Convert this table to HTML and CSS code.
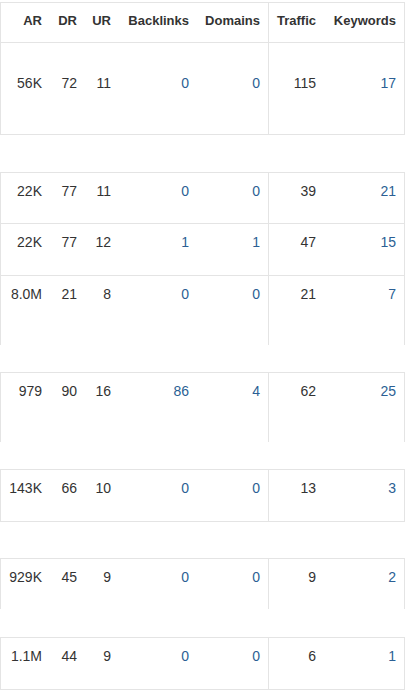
FILE: index.html
```html
<!DOCTYPE html>
<html lang="en">
<head>
  <meta charset="UTF-8">
  <title>Backlink metrics</title>
  <link rel="stylesheet" href="styles.css">
</head>
<body>
  <div class="metrics">
    <div class="row row-head">
      <div class="cell">AR</div>
      <div class="cell">DR</div>
      <div class="cell">UR</div>
      <div class="cell">Backlinks</div>
      <div class="cell cell-split">Domains</div>
      <div class="cell">Traffic</div>
      <div class="cell">Keywords</div>
    </div>

    <div class="row row-tall closed">
      <div class="cell">56K</div>
      <div class="cell">72</div>
      <div class="cell">11</div>
      <div class="cell link">0</div>
      <div class="cell link cell-split">0</div>
      <div class="cell">115</div>
      <div class="cell link">17</div>
    </div>
    <div class="gap gap-lg"></div>

    <div class="row h51">
      <div class="cell">22K</div>
      <div class="cell">77</div>
      <div class="cell">11</div>
      <div class="cell link">0</div>
      <div class="cell link cell-split">0</div>
      <div class="cell">39</div>
      <div class="cell link">21</div>
    </div>
    <div class="row h52">
      <div class="cell">22K</div>
      <div class="cell">77</div>
      <div class="cell">12</div>
      <div class="cell link">1</div>
      <div class="cell link cell-split">1</div>
      <div class="cell">47</div>
      <div class="cell link">15</div>
    </div>
    <div class="row h70">
      <div class="cell">8.0M</div>
      <div class="cell">21</div>
      <div class="cell">8</div>
      <div class="cell link">0</div>
      <div class="cell link cell-split">0</div>
      <div class="cell">21</div>
      <div class="cell link">7</div>
    </div>
    <div class="gap gap-sm"></div>

    <div class="row h70">
      <div class="cell">979</div>
      <div class="cell">90</div>
      <div class="cell">16</div>
      <div class="cell link">86</div>
      <div class="cell link cell-split">4</div>
      <div class="cell">62</div>
      <div class="cell link">25</div>
    </div>
    <div class="gap gap-sm"></div>

    <div class="row h53 closed">
      <div class="cell">143K</div>
      <div class="cell">66</div>
      <div class="cell">10</div>
      <div class="cell link">0</div>
      <div class="cell link cell-split">0</div>
      <div class="cell">13</div>
      <div class="cell link">3</div>
    </div>
    <div class="gap gap-md"></div>

    <div class="row h51">
      <div class="cell">929K</div>
      <div class="cell">45</div>
      <div class="cell">9</div>
      <div class="cell link">0</div>
      <div class="cell link cell-split">0</div>
      <div class="cell">9</div>
      <div class="cell link">2</div>
    </div>
    <div class="gap gap-sm2"></div>

    <div class="row h53 closed">
      <div class="cell">1.1M</div>
      <div class="cell">44</div>
      <div class="cell">9</div>
      <div class="cell link">0</div>
      <div class="cell link cell-split">0</div>
      <div class="cell">6</div>
      <div class="cell link">1</div>
    </div>
  </div>
</body>
</html>
```

FILE: styles.css
```css
body {
  margin: 0;
  background: #fff;
  font-family: 'Liberation Sans', Arial, sans-serif;
  color: #333;
}
.metrics {
  width: 405px;
  padding-top: 2px;
}
.row {
  display: grid;
  grid-template-columns: 49px 35px 34px 78px 72px 55px 80px;
  box-sizing: border-box;
  border-top: 1px solid #e4e4e4;
  border-left: 1px solid #e4e4e4;
  border-right: 1px solid #e4e4e4;
}
.row.closed {
  border-bottom: 1px solid #e4e4e4;
}
.cell {
  padding: 8px 8px 0 0;
  font-size: 14px;
  line-height: 20px;
  text-align: right;
  white-space: nowrap;
}
.cell-split {
  border-right: 1px solid #e4e4e4;
}
.link {
  color: #2b5f94;
}
.row-head {
  height: 40px;
}
.row-head .cell {
  font-size: 13px;
  font-weight: bold;
  color: #333;
}
.row-tall {
  height: 93px;
}
.row-tall .cell {
  padding-top: 30px;
}
.h51 { height: 51px; }
.h52 { height: 52px; }
.h53 { height: 53px; }
.h70 { height: 70px; }
.gap-lg { height: 37px; }
.gap-md { height: 36px; }
.gap-sm { height: 27px; }
.gap-sm2 { height: 28px; }
```
